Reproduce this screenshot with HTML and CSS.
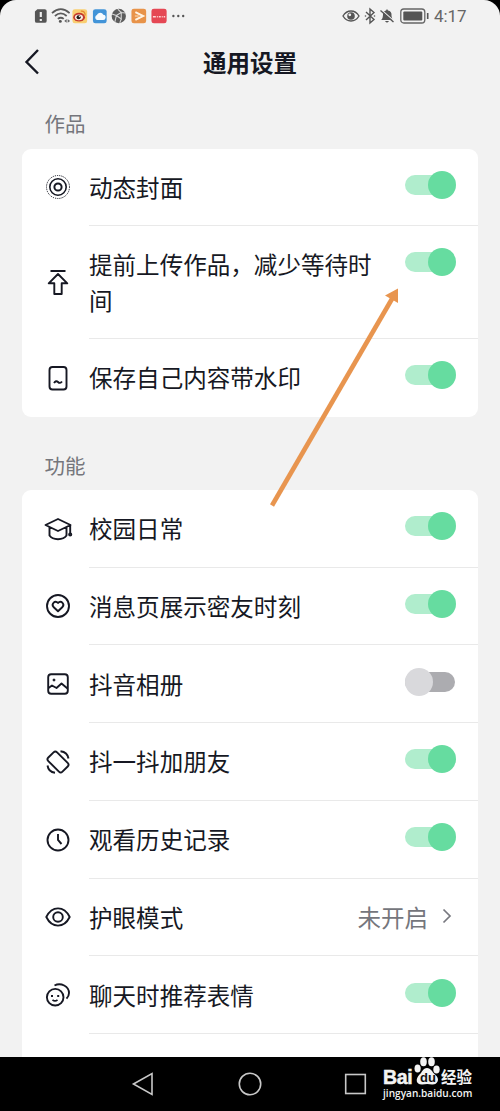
FILE: index.html
```html
<!DOCTYPE html>
<html lang="zh-CN">
<head>
<meta charset="utf-8">
<title>通用设置</title>
<link rel="stylesheet" href="styles.css">
</head>
<body>
<div class="phone">
  <main class="screen">
    <div class="status">
      <div class="status-left">
        <svg viewBox="-10 -10 20 20"><path d="M-3.500-7H4Q6-7 6-5V5Q6 7 4 7H-4Q-6 7-6 5V-4.500Z" fill="#555"/><path d="M0-4V1M0 3V5" stroke="#eee" stroke-width="2.200"/></svg>
        <svg viewBox="-10 -10 20 20"><g fill="none" stroke="#5c5c5c" stroke-width="1.800"><path d="M-9-3Q0-11 9-3M-6 0Q0-5.500 6 0M-3 3Q0 .5 3 3"/></g><circle cx="-.5" cy="5.500" r="1.500" fill="#555"/><path d="M6 3 3.500 5 6 7ZM7 3 9.500 5 7 7Z" fill="#666"/></svg>
        <svg viewBox="-10 -10 20 20"><rect x="-7.500" y="-7" width="15" height="14.500" rx="2.500" fill="#f9cf72"/><ellipse cx="-.7" cy="1.200" rx="6" ry="4.500" fill="#c5392c"/><ellipse cx="-.9" cy="1.400" rx="4.100" ry="2.900" fill="#f7ede0"/><circle cx="-1.200" cy="1.300" r="2.100" fill="#271c18"/><circle cx="-.4" cy=".6" r=".7" fill="#fff"/><path d="M1-5Q5.500-5.500 5.500-.5" fill="none" stroke="#e58c32" stroke-width="1.300"/></svg>
        <svg viewBox="-10 -10 20 20"><rect x="-7" y="-7" width="14" height="14.500" rx="2.500" fill="#4294d8"/><path d="M-3 4A2.700 2.700 0 0 1-3-1 3.500 3.500 0 0 1 3.600-1.200 2.600 2.600 0 0 1 3 4Z" fill="#f6fbff"/></svg>
        <svg viewBox="-10 -10 20 20"><circle r="7.300" fill="#5c5c5c"/><path d="M-2.500-.5 2.500-3.500 2.500 3ZM-2.500-.5-7-2M2.500-3.500-1-7M2.500 3 1 7M2.500-3.500 6.500-3M-2.500-.5-4 6" fill="none" stroke="#d6d6d6" stroke-width="1.100"/></svg>
        <svg viewBox="-10 -10 20 20"><rect x="-7.500" y="-7.500" width="15" height="15" rx="2.500" fill="#e89349"/><path d="M-3.500-4 4.500 0-3.500 4" fill="none" stroke="#fff4e5" stroke-width="2"/><path d="M-4 0H0" stroke="#f8c999" stroke-width="1.500"/></svg>
        <svg viewBox="-10 -10 20 20"><rect x="-7.500" y="-7.500" width="15.500" height="15" rx="2.500" fill="#e54754"/><path d="M-6 .8H-3M-2 .8H-1M0 .8H2M3 .8H4M5 .8H6.500" stroke="#ffd5d5" stroke-width="1.400"/></svg>
        <svg viewBox="-10 -10 20 20" fill="#555"><circle cx="-4.500" r="1.200"/><circle cx=".5" r="1.200"/><circle cx="5.500" r="1.200"/></svg>
      </div>
      <div class="status-right">
        <svg width="18" height="20" viewBox="-9 -10 18 20"><path d="M-8 0Q-5-5 0-5T8 0Q5 5 0 5T-8 0Z" fill="none" stroke="#555" stroke-width="1.400"/><circle r="3.800" fill="#555"/><circle cx="-1.200" cy="-1.200" r="1.400" fill="#eee"/></svg>
        <svg width="20" height="20" viewBox="-10 -10 20 20"><path d="M-4-4 4 3.500 0 7V-7L4-3.500-4 4" fill="none" stroke="#555" stroke-width="1.400"/><circle cx="-4.500" r=".8" fill="#555"/><circle cx="4.500" r=".8" fill="#555"/></svg>
        <svg width="14" height="20" viewBox="-7 -10 14 20"><path d="M-6 4Q-4 3-4-2Q-4-5-1-5.500L0-7 1-5.500Q5-5 4.500 0L5.500 4ZM-2 5H2Q0 8-2 5Z" fill="#555"/><path d="M-6-6.500 7.500 5.500" stroke="#f2f2f2" stroke-width="1.200"/><path d="M-6.500-5.500 6.500 6" stroke="#555" stroke-width="1.400"/></svg>
        <svg class="battery" width="30" height="20" viewBox="0 -10 30 20"><rect x=".8" y="-7" width="24" height="14" rx="3" fill="none" stroke="#666" stroke-width="1.300"/><rect x="3.300" y="-4.500" width="19" height="9" rx="1" fill="#555"/><path d="M27.700-3V3" stroke="#555" stroke-width="1.600"/></svg>
        <span class="time">4:17</span>
      </div>
    </div>
    <header class="header">
      <svg class="back" viewBox="0 0 16 28"><path d="M14 2 2.500 14 14 25.500" fill="none" stroke="#161823" stroke-width="2.400"/></svg>
      <h1 class="title">通用设置</h1>
    </header>

    <h2 class="section">作品</h2>
    <section class="card">
      <div class="row row-first">
        <svg class="icon" viewBox="-14 -14 28 28"><circle r="3.600" stroke-width="2"/><circle r="8.200" stroke-width="1.600"/><circle r="11.500" stroke-width="1" stroke-dasharray="1.200 1"/></svg>
        <div class="content"><span class="label">动态封面</span><i class="toggle"></i></div>
      </div>
      <div class="row">
        <svg class="icon" viewBox="-14 -14 28 28"><path d="M-7.500-11H7.500M0-8 9.300 1.300H3.700V12H-3.700V1.300H-9.300Z" stroke-linejoin="round"/></svg>
        <div class="content"><span class="label">提前上传作品，减少等待时间</span><i class="toggle"></i></div>
      </div>
      <div class="row">
        <svg class="icon" viewBox="-14 -14 28 28"><rect x="-8.500" y="-11" width="17" height="22.500" rx="3"/><path d="M-4 5Q-2 2 0 4T4 3.500"/></svg>
        <div class="content"><span class="label">保存自己内容带水印</span><i class="toggle"></i></div>
      </div>
    </section>

    <h2 class="section section-second">功能</h2>
    <section class="card">
      <div class="row">
        <svg class="icon" viewBox="-14 -14 28 28"><path d="M-12.500-4 0-10 12.500-4 0 2ZM-8.500-1.500V6.500Q-6 10.200 0 10.200T8.500 6.500V-1.500M12.200-3.500V5" stroke-linejoin="round"/><circle cx="12.200" cy="5.500" r="1.100"/></svg>
        <div class="content"><span class="label">校园日常</span><i class="toggle"></i></div>
      </div>
      <div class="row">
        <svg class="icon" viewBox="-14 -14 28 28"><circle r="11"/><path d="M0 5.300-4.500 1C-7-2 -3-6.500 0-3 3-6.500 7-2 4.500 1Z" stroke-linejoin="round"/></svg>
        <div class="content"><span class="label">消息页展示密友时刻</span><i class="toggle"></i></div>
      </div>
      <div class="row">
        <svg class="icon" viewBox="-14 -14 28 28"><rect x="-9.800" y="-9.800" width="19.600" height="19.600" rx="3"/><path d="M-9.500 4-6 1.500-1.500 4 3.500-.5 9.500 4.500" stroke-linejoin="round"/><circle cx="-4" cy="-4" r="1" fill="#161823" stroke-width="1"/></svg>
        <div class="content"><span class="label">抖音相册</span><i class="toggle off"></i></div>
      </div>
      <div class="row">
        <svg class="icon" viewBox="-14 -14 28 28"><rect x="-6.200" y="-10" width="12.400" height="20" rx="2.500" transform="rotate(-45)"/><path d="M2.500-10.800Q9.500-10 10.500-3.500M-10.500 3.500Q-9.500 10-3 10.800"/></svg>
        <div class="content"><span class="label">抖一抖加朋友</span><i class="toggle"></i></div>
      </div>
      <div class="row">
        <svg class="icon" viewBox="-14 -14 28 28"><circle r="10.500"/><path d="M0-6V0L3.500 4"/></svg>
        <div class="content"><span class="label">观看历史记录</span><i class="toggle"></i></div>
      </div>
      <div class="row">
        <svg class="icon" viewBox="-14 -14 28 28"><path d="M-11.700 0C-6-11.500 6-11.500 11.700 0 6 11.500-6 11.500-11.700 0Z" stroke-linejoin="round"/><circle r="4.800"/></svg>
        <div class="content"><span class="label">护眼模式</span><span class="value">未开启</span><svg class="chevron" viewBox="0 0 10 18"><path d="M1.500 2.500 8 9 1.500 15.500" fill="none" stroke="#77787f" stroke-width="1.700"/></svg></div>
      </div>
      <div class="row">
        <svg class="icon" viewBox="-14 -14 28 28"><circle cx="-2.800" cy="2.200" r="8.300"/><path d="M-3.500-9.500C3-13 11-8.500 11-2Q11 1 8.500 3.700"/><path d="M-6 0V2M.2 0V2" stroke-width="2"/><path d="M-5.500 4.800Q-3 7-.5 4.800" stroke-width="1.700"/></svg>
        <div class="content"><span class="label">聊天时推荐表情</span><i class="toggle"></i></div>
      </div>
    </section>
  </main>
  <svg class="arrow" viewBox="0 0 132 222"><path d="M3 220.500 123.500 13" stroke="#e8954f" stroke-width="4.600"/><path d="M129 3.500V18L116 10.500Z" fill="#e8954f"/></svg>
  <nav class="nav">
    <svg viewBox="-12 -12 24 24"><path d="M-10.500 0 8-10.500V10.500Z"/></svg>
    <svg viewBox="-12 -12 24 24"><circle r="10.700"/></svg>
    <svg viewBox="-12 -12 24 24"><rect x="-10.300" y="-9.500" width="19.600" height="19"/></svg>
  </nav>
  <div class="watermark">
    <div class="brand">
      <span class="bai">Bai</span>
      <span class="paw"><svg viewBox="0 0 27 30"><g fill="#f3f3f3"><ellipse cx="3.600" cy="12.500" rx="3.100" ry="4"/><ellipse cx="9.500" cy="5.800" rx="3.300" ry="4.500"/><ellipse cx="17.500" cy="5.800" rx="3.300" ry="4.500"/><ellipse cx="22.500" cy="13.500" rx="3.200" ry="4"/><path d="M13 12C17 12 18 16 21 18.500 27 23.500 23 29 18 28.500Q13 27.500 8.500 28.500C2 29 1 23 5.500 18.500 8 16.500 9 12 13 12Z"/></g></svg><b class="du">du</b></span>
      <span class="jingyan">经验</span>
    </div>
    <div class="url">jingyan.baidu.com</div>
  </div>
</div>
</body>
</html>
```
FILE: styles.css
```css
* { box-sizing: border-box; }
body { margin: 0; background: #000; font-family: "Noto Sans CJK SC", sans-serif; color: #161823; }
.phone { position: relative; width: 500px; height: 1111px; overflow: hidden; display: flex; flex-direction: column; background: #000; }
.screen { height: 1057px; flex: none; overflow: hidden; background: #f2f2f2; border-radius: 16px 16px 0 0; }
svg { display: block; flex: none; overflow: visible; }

.status { height: 31px; display: flex; justify-content: space-between; padding-left: 31px; padding-right: 34px; }
.status-left, .status-right { display: flex; align-items: center; }
.status-left svg { width: 19.6px; height: 20px; }
.battery { margin-left: 6px; }
.time { width: 32px; margin-left: 4px; font: 17px/32px Roboto, sans-serif; letter-spacing: -.1px; color: #666; white-space: nowrap; }

.header { height: 62px; display: grid; grid-template-columns: 60px 1fr 60px; align-items: center; }
.back { width: 16px; height: 28px; margin-left: 24px; }
.title { margin: 0; text-align: center; font-size: 23.500px; line-height: 36px; font-weight: 700; }

.section { margin: 0; height: 56px; padding: 15px 0 0 44.500px; font-size: 20.500px; line-height: 30px; font-weight: 400; color: #75767c; }
.section-second { height: 73.250px; padding-top: 33px; }
.card { width: 456px; margin: 0 22px; background: #fff; border-radius: 9px; }
.row { display: grid; grid-template-columns: 67px 1fr; align-items: center; }
.icon { width: 28px; height: 28px; margin: 0 0 0 22px; fill: none; stroke: #161823; stroke-width: 1.900; }
.content { display: flex; align-items: flex-start; min-height: 77.750px; padding: 21.250px 22px 19.750px 0; border-bottom: 1px solid #e9e9e9; }
.row:last-child .content { border-bottom-color: transparent; }
.row-first .content { min-height: 76.800px; padding: 21px 22px 19px 0; }
.screen .card:last-child .row:last-child .content { border-bottom-color: #e9e9e9; }
.screen .card:last-child { height: 600px; border-radius: 9px 9px 0 0; }
.label { flex: 1; font-size: 23.550px; line-height: 35.500px; margin-right: 30px; }
.toggle { position: relative; flex: none; width: 50px; height: 20px; margin: 5px 1px 0 0; border-radius: 10px; background: #b0edcd; }
.row-first .toggle { margin-top: 4.500px; }
.toggle::after { content: ""; position: absolute; top: -4px; right: -1px; width: 28px; height: 28px; border-radius: 50%; background: #66dca0; }
.toggle.off { background: #acacb0; }
.toggle.off::after { right: auto; left: 0; background: #d9d9dc; }
.value { font-size: 23.500px; line-height: 35.500px; color: #75767c; }
.chevron { width: 10px; height: 18px; margin: 7px 4px 0 14px; }
.arrow { position: absolute; left: 269px; top: 285px; width: 132px; height: 222px; }

.nav { height: 54px; display: grid; grid-template-columns: repeat(3, 106px); padding-left: 91px; align-items: center; justify-items: center; }
.nav svg { width: 24px; height: 24px; fill: none; stroke: #c8c8c8; stroke-width: 1.600; }
.watermark { position: absolute; left: 383px; top: 1057px; width: 92px; color: #f3f3f3; }
.brand { display: flex; height: 29px; align-items: flex-start; }
.bai { width: 31px; font: 700 19.500px/28px "Liberation Sans", sans-serif; padding-top: 6px; letter-spacing: -.3px; -webkit-text-stroke: .5px #f3f3f3; }
.paw { position: relative; width: 27px; }
.paw svg { width: 27px; height: 30px; margin-top: -1px; }
.du { position: absolute; left: 6px; top: 14px; font: 700 13px/14px "Liberation Sans", sans-serif; color: #111; }
.jingyan { font-size: 15.500px; line-height: 24px; font-weight: 700; padding-top: 7px; white-space: nowrap; }
.url { font: 600 10.100px/14px "Open Sans", sans-serif; }
```
